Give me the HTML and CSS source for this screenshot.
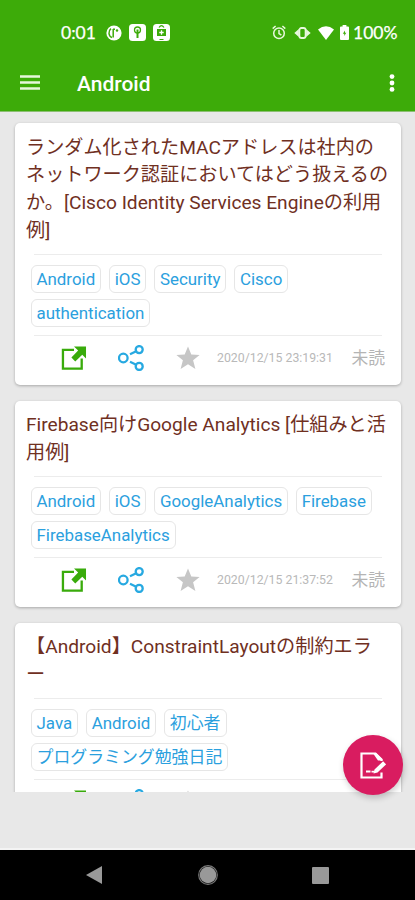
FILE: index.html
```html
<!DOCTYPE html>
<html lang="ja">
<head>
<meta charset="utf-8">
<title>Android</title>
<link rel="stylesheet" href="styles.css">
</head>
<body>
<svg class="defs" aria-hidden="true">
  <symbol id="open" viewBox="0 0 26 26"><path d="M13 4H1.5v19.500H21V13" fill="none" stroke="#39ab0b" stroke-width="2.400"/><path d="M13 0.500h12.500V13l-3.900-3.900-7.300 6.900-4-4 7-7.400z" fill="#39ab0b"/></symbol>
  <symbol id="share" viewBox="0 0 26 26"><g fill="none" stroke="#27a9e1" stroke-width="2.300"><circle cx="5.300" cy="13" r="4.300"/><circle cx="21.200" cy="4.600" r="3.500"/><circle cx="21.200" cy="21.400" r="3.500"/><path d="M12 9.200l6.200-3M12 16.800l6.200 3"/></g></symbol>
  <symbol id="star" viewBox="0 0 24 24"><path d="M12 .5l3.300 8.100 8.300.3-6.500 5.400 2.300 8.700-7.400-4.800L4.600 23l2.300-8.700L.4 8.900l8.300-.3z" fill="#c6c6c6"/></symbol>
</svg>
<div class="phone">
  <header class="top">
    <div class="status">
      <span class="clock">0:01</span>
      <svg class="s-p" viewBox="0 0 16 16"><circle cx="8" cy="8" r="7.600" fill="#fff"/><path d="M7.200 4v8.500M5 3.700Q2.700 5.500 3 8.500T6 12.500M7 4.200h2" fill="none" stroke="#3dab09" stroke-width="1.500"/><circle cx="11" cy="5.500" r="1.200" fill="#3dab09"/></svg>
      <svg class="s-key" viewBox="0 0 17 17"><rect width="17" height="17" rx="3.500" fill="#fff"/><circle cx="8.500" cy="6" r="3" fill="none" stroke="#3dab09" stroke-width="1.300"/><path d="M8.500 5.500V14" stroke="#3dab09" stroke-width="2"/></svg>
      <svg class="s-bag" viewBox="0 0 17 17"><rect width="17" height="17" rx="3.500" fill="#fff"/><path d="M6 3.500Q8.500-.2 11 3.500M6.500 15.500h4" fill="none" stroke="#3dab09" stroke-width="1.200"/><rect x="4" y="5" width="9" height="7" fill="#3dab09"/><path d="M8.500 6.300v4.400M6.300 8.500h4.400" stroke="#fff" stroke-width="1.300"/></svg>
      <span class="fill"></span>
      <svg class="s-alarm" viewBox="0 0 14 15"><g fill="none" stroke="#e8f8de" stroke-width="1.500"><circle cx="7" cy="8.200" r="5.300"/><path d="M7 5v3.500l2.400 1.700M.7 3.600L3.600 1M13.300 3.600L10.400 1"/></g></svg>
      <svg class="s-vib" viewBox="0 0 17 12"><rect x="5.400" y="1" width="6.200" height="10" rx="2" fill="none" stroke="#e8f8de" stroke-width="1.800"/><path d="M4.900 2v8L.3 6zM12.100 2v8L16.700 6z" fill="#e8f8de"/></svg>
      <svg class="s-wifi" viewBox="0 0 16 14"><path d="M0 3.500Q8-2.800 16 3.500L8 14z" fill="#fff"/></svg>
      <svg class="s-bat" viewBox="0 0 9 15"><path d="M2.600 0h3.800v1.500H8q1 0 1 1V14q0 1-1 1H1q-1 0-1-1V2.500q0-1 1-1h1.600z" fill="#fff"/><path d="M5 5.500L2.800 8.700h1.500V11l2-3.200H5z" fill="#3dab09"/></svg>
      <span class="pct">100%</span>
    </div>
    <div class="bar">
      <svg class="menu" viewBox="0 0 20 15"><path d="M0 1.500h20M0 7.500h20M0 13.500h20" stroke="#e6f7dc" stroke-width="2.300"/></svg>
      <h1>Android</h1>
      <svg class="more" viewBox="0 0 6 18"><g fill="#fff"><circle cx="3" cy="2.600" r="2.400"/><circle cx="3" cy="9" r="2.400"/><circle cx="3" cy="15.400" r="2.400"/></g></svg>
    </div>
  </header>
  <main class="list">
    <article class="card">
      <h2>ランダム化されたMACアドレスは社内の<br>ネットワーク認証においてはどう扱えるの<br>か。[Cisco Identity Services Engineの利用<br>例]</h2>
      <div class="tags"><span>Android</span><span>iOS</span><span>Security</span><span>Cisco</span><span>authentication</span></div>
      <footer class="actions"><svg class="open"><use href="#open"/></svg><svg class="share"><use href="#share"/></svg><svg class="star"><use href="#star"/></svg><time>2020/12/15 23:19:31</time><span class="unread">未読</span></footer>
    </article>
    <article class="card">
      <h2>Firebase向けGoogle Analytics [仕組みと活<br>用例]</h2>
      <div class="tags"><span>Android</span><span>iOS</span><span>GoogleAnalytics</span><span>Firebase</span><span>FirebaseAnalytics</span></div>
      <footer class="actions"><svg class="open"><use href="#open"/></svg><svg class="share"><use href="#share"/></svg><svg class="star"><use href="#star"/></svg><time>2020/12/15 21:37:52</time><span class="unread">未読</span></footer>
    </article>
    <article class="card">
      <h2>【Android】ConstraintLayoutの制約エラ<br>ー</h2>
      <div class="tags"><span>Java</span><span>Android</span><span>初心者</span><span>プログラミング勉強日記</span></div>
      <footer class="actions"><svg class="open"><use href="#open"/></svg><svg class="share"><use href="#share"/></svg><svg class="star"><use href="#star"/></svg></footer>
    </article>
  </main>
  <div class="ad"></div>
  <nav class="nav">
    <svg viewBox="0 0 16 18"><path d="M0 9L16 0v18z" fill="#999"/></svg>
    <svg class="home" viewBox="0 0 20 20"><circle cx="10" cy="10" r="9.300" fill="none" stroke="#777" stroke-width="1.200"/><circle cx="10" cy="10" r="8.300" fill="#999"/></svg>
    <svg class="recent" viewBox="0 0 17 17"><rect width="17" height="17" rx="1" fill="#999"/></svg>
  </nav>
  <button class="fab" aria-label="編集"><svg viewBox="0 0 26 27"><path d="M14.500 1.500H1.500v24h20v-5M21.500 9V7.500l-6-6h-2" fill="none" stroke="#fff" stroke-width="2.200"/><path d="M13.500 1v1l4.500 6.500h4.500V7.500L16 1z" fill="#fff"/><path d="M14.500 17.500l8.600-8.200 3 3-8.600 8.200-4 .900zM6 18.500h4.500v2H6z" fill="#fff"/><path d="M11.500 18.800h3v1.700h-3z" fill="#fff"/></svg></button>
</div>
</body>
</html>
```

FILE: styles.css
```css
* { box-sizing: border-box; }
body { margin: 0; font-family: Roboto, "Noto Sans CJK JP", sans-serif; }
svg { display: block; flex: none; }
.defs { display: none; }
.phone {
  position: relative;
  width: 415px;
  height: 900px;
  overflow: hidden;
  display: flex;
  flex-direction: column;
  background: #e8e8e8;
}
.top {
  height: 112px;
  flex: none;
  background: #3dab09;
  border-bottom: 1px solid #8cbf73;
  color: #fff;
}
.status {
  display: flex;
  align-items: center;
  height: 56px;
  padding: 9px 19px 0 61px;
  font: 17.5px/20px Lato, sans-serif;
  -webkit-text-stroke: .25px #fff;
}
.clock { width: 45px; }
.s-p { width: 16px; height: 16px; }
.s-key { width: 17px; height: 17px; margin-left: 7px; }
.s-bag { width: 17px; height: 17px; margin-left: 7px; }
.fill { flex: 1; }
.s-alarm { width: 14px; height: 15px; margin-right: 8px; }
.s-vib { width: 17px; height: 12px; margin-right: 7px; }
.s-wifi { width: 16px; height: 14px; margin-right: 6px; }
.s-bat { width: 9px; height: 15px; margin-right: 4px; }
.pct { width: 43px; white-space: nowrap; }
.bar { display: flex; align-items: center; height: 55px; padding: 0 20px; }
.menu { width: 20px; height: 15px; margin: -3px 37px 0 0; }
.bar h1 { flex: 1; margin: 0; font-size: 21px; font-weight: 500; line-height: 28px; }
.more { width: 6px; height: 18px; margin-top: -2px; }
.list {
  height: 680px;
  flex: none;
  overflow: hidden;
  padding: 11px 14.5px 0 15px;
  display: flex;
  flex-direction: column;
  gap: 16px;
}
.card {
  flex: none;
  padding: 10.5px 11px 0;
  border-radius: 5px;
  background: #fff;
  box-shadow: 0 1px 3px rgba(0, 0, 0, .28);
}
.card h2 {
  margin: 0;
  font-size: 19.15px;
  font-weight: 400;
  line-height: 27.8px;
  color: #70301f;
  white-space: nowrap;
  text-spacing-trim: space-all;
}
.tags {
  display: flex;
  flex-wrap: wrap;
  gap: 6px 7.5px;
  margin: 9px 8px 0;
  padding: 10px 0 8px;
  border-top: 1px solid #ececec;
  border-bottom: 1px solid #ececec;
}
.tags span {
  height: 28px;
  margin-left: -3.5px;
  margin-right: 3.5px;
  padding: 0 5px;
  border: 1px solid #e6e6e6;
  border-radius: 6px;
  font-size: 16.9px;
  line-height: 27px;
  color: #2ba0de;
  white-space: nowrap;
}
.actions { display: flex; align-items: center; height: 49px; padding: 0 4px 4px 35px; }
.open { width: 26px; height: 25px; }
.share { width: 26px; height: 26px; margin-left: 31px; }
.star { width: 24px; height: 24px; margin-left: 32px; }
.actions time { width: 134.5px; margin-left: 17px; font-size: 12.3px; color: #b9b9b9; white-space: nowrap; }
.unread { font-size: 16.8px; line-height: 24px; color: #b4b4b4; white-space: nowrap; }
.ad { flex: 1; border-bottom: 2px solid #f4f4f4; }
.nav {
  height: 50px;
  flex: none;
  display: flex;
  align-items: center;
  padding-left: 86px;
  background: #000;
}
.nav svg { width: 16px; height: 18px; }
.nav .home { width: 20px; height: 20px; margin-left: 96px; }
.nav .recent { width: 17px; height: 17px; margin-left: 94px; }
.fab {
  position: absolute;
  left: 343px;
  top: 735px;
  width: 60px;
  height: 60px;
  padding: 0;
  border: 0;
  border-radius: 50%;
  display: flex;
  align-items: center;
  justify-content: center;
  background: #d91c60;
  box-shadow: 1px 3px 6px rgba(0, 0, 0, .2);
}
.fab svg { width: 26px; height: 27px; }
```
